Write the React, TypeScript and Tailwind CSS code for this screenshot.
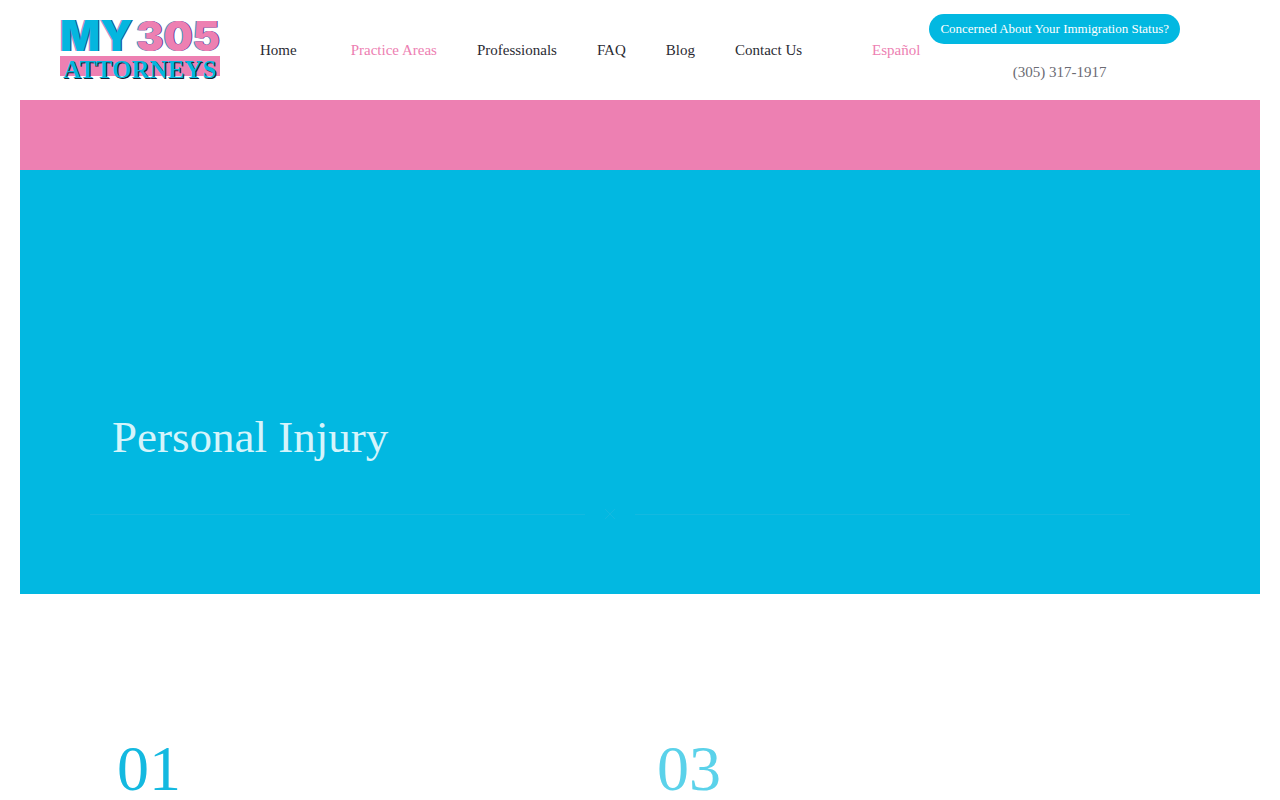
const navLinks = [
  { label: "Home", href: "#home", className: "mr-[14px] text-[#2b2b33]" },
  { label: "Practice Areas", href: "#practice-areas", className: "text-[#ed80b2]" },
  { label: "Professionals", href: "#professionals", className: "text-[#2b2b33]" },
  { label: "FAQ", href: "#faq", className: "text-[#2b2b33]" },
  { label: "Blog", href: "#blog", className: "text-[#2b2b33]" },
  { label: "Contact Us", href: "#contact", className: "text-[#2b2b33]" },
  { label: "Español", href: "#es", className: "ml-[30px] text-[#ed80b2]" },
];

const steps = [
  { number: "01", className: "text-[#14b9e0]" },
  { number: "03", className: "text-[#5bd2ea]" },
];

const Logo = () => (
  <svg
    width="160"
    height="90"
    viewBox="0 0 160 90"
    className="block overflow-visible"
    fontFamily="Inter, sans-serif"
    fontWeight="900"
  >
    <rect x="0" y="51" width="160" height="20" fill="#ed80b2" />
    <text
      x="0"
      y="46"
      fontSize="42"
      fill="#04b6df"
      className="[text-shadow:1px_0_0_#2c4a8c,-1px_0_0_#c77fc0]"
    >
      MY
    </text>
    <text
      x="76"
      y="46"
      fontSize="41"
      fill="#ed80b2"
      className="[text-shadow:1px_0_0_#5a3f93,-1px_0_0_#3aa9d8]"
    >
      305
    </text>
    <text
      x="3"
      y="73"
      fontSize="25"
      fontFamily="'Liberation Serif', serif"
      fill="#04b6df"
      className="[text-shadow:1px_1px_0_#16202f]"
    >
      ATTORNEYS
    </text>
  </svg>
);

const Header = () => (
  <header className="flex h-[100px] items-center px-10">
    <a href="#home" aria-label="My 305 Attorneys" className="mr-10 shrink-0">
      <Logo />
    </a>
    <nav className="flex shrink-0 items-center gap-10 text-[15px] leading-5">
      {navLinks.map((link) => (
        <a key={link.href} href={link.href} className={link.className}>
          {link.label}
        </a>
      ))}
    </nav>
    <div className="ml-[9px] flex shrink-0 flex-col items-center gap-[18px] pb-1">
      <button
        type="button"
        className="h-[30px] rounded-full bg-[#02b8e1] px-[11px] text-[13px] leading-5 font-medium text-white"
      >
        Concerned About Your Immigration Status?
      </button>
      <a href="tel:3053171917" className="pl-[10px] text-[15px] leading-5 text-[#6b6b73]">
        (305) 317-1917
      </a>
    </div>
  </header>
);

const Divider = () => (
  <div className="flex items-center gap-5 text-[#14b9e0]">
    <div className="h-px flex-1 bg-current" />
    <svg width="10" height="10" viewBox="0 0 10 10" stroke="currentColor">
      <path d="M0 0L10 10M10 0L0 10" />
    </svg>
    <div className="h-px flex-1 bg-current" />
  </div>
);

export default function App() {
  return (
    <div className="bg-white px-5 font-['Liberation_Serif',serif]">
      <Header />
      <main>
        <div className="h-[70px] bg-[#ed80b2]" />
        <section className="bg-[#02b8e1] pt-[242px] pr-[130px] pb-[75px] pl-[70px]">
          <h1 className="mb-[47px] pl-[22px] text-[45px] leading-[50px] text-[#d5f4fb]">
            Personal Injury
          </h1>
          <Divider />
        </section>
        <section className="grid grid-cols-2 pt-[145px] pr-[63px] pl-[97px]">
          {steps.map((step) => (
            <div key={step.number} className={step.className}>
              <span className="block text-[64px] leading-[60px]">{step.number}</span>
            </div>
          ))}
        </section>
      </main>
    </div>
  );
}
